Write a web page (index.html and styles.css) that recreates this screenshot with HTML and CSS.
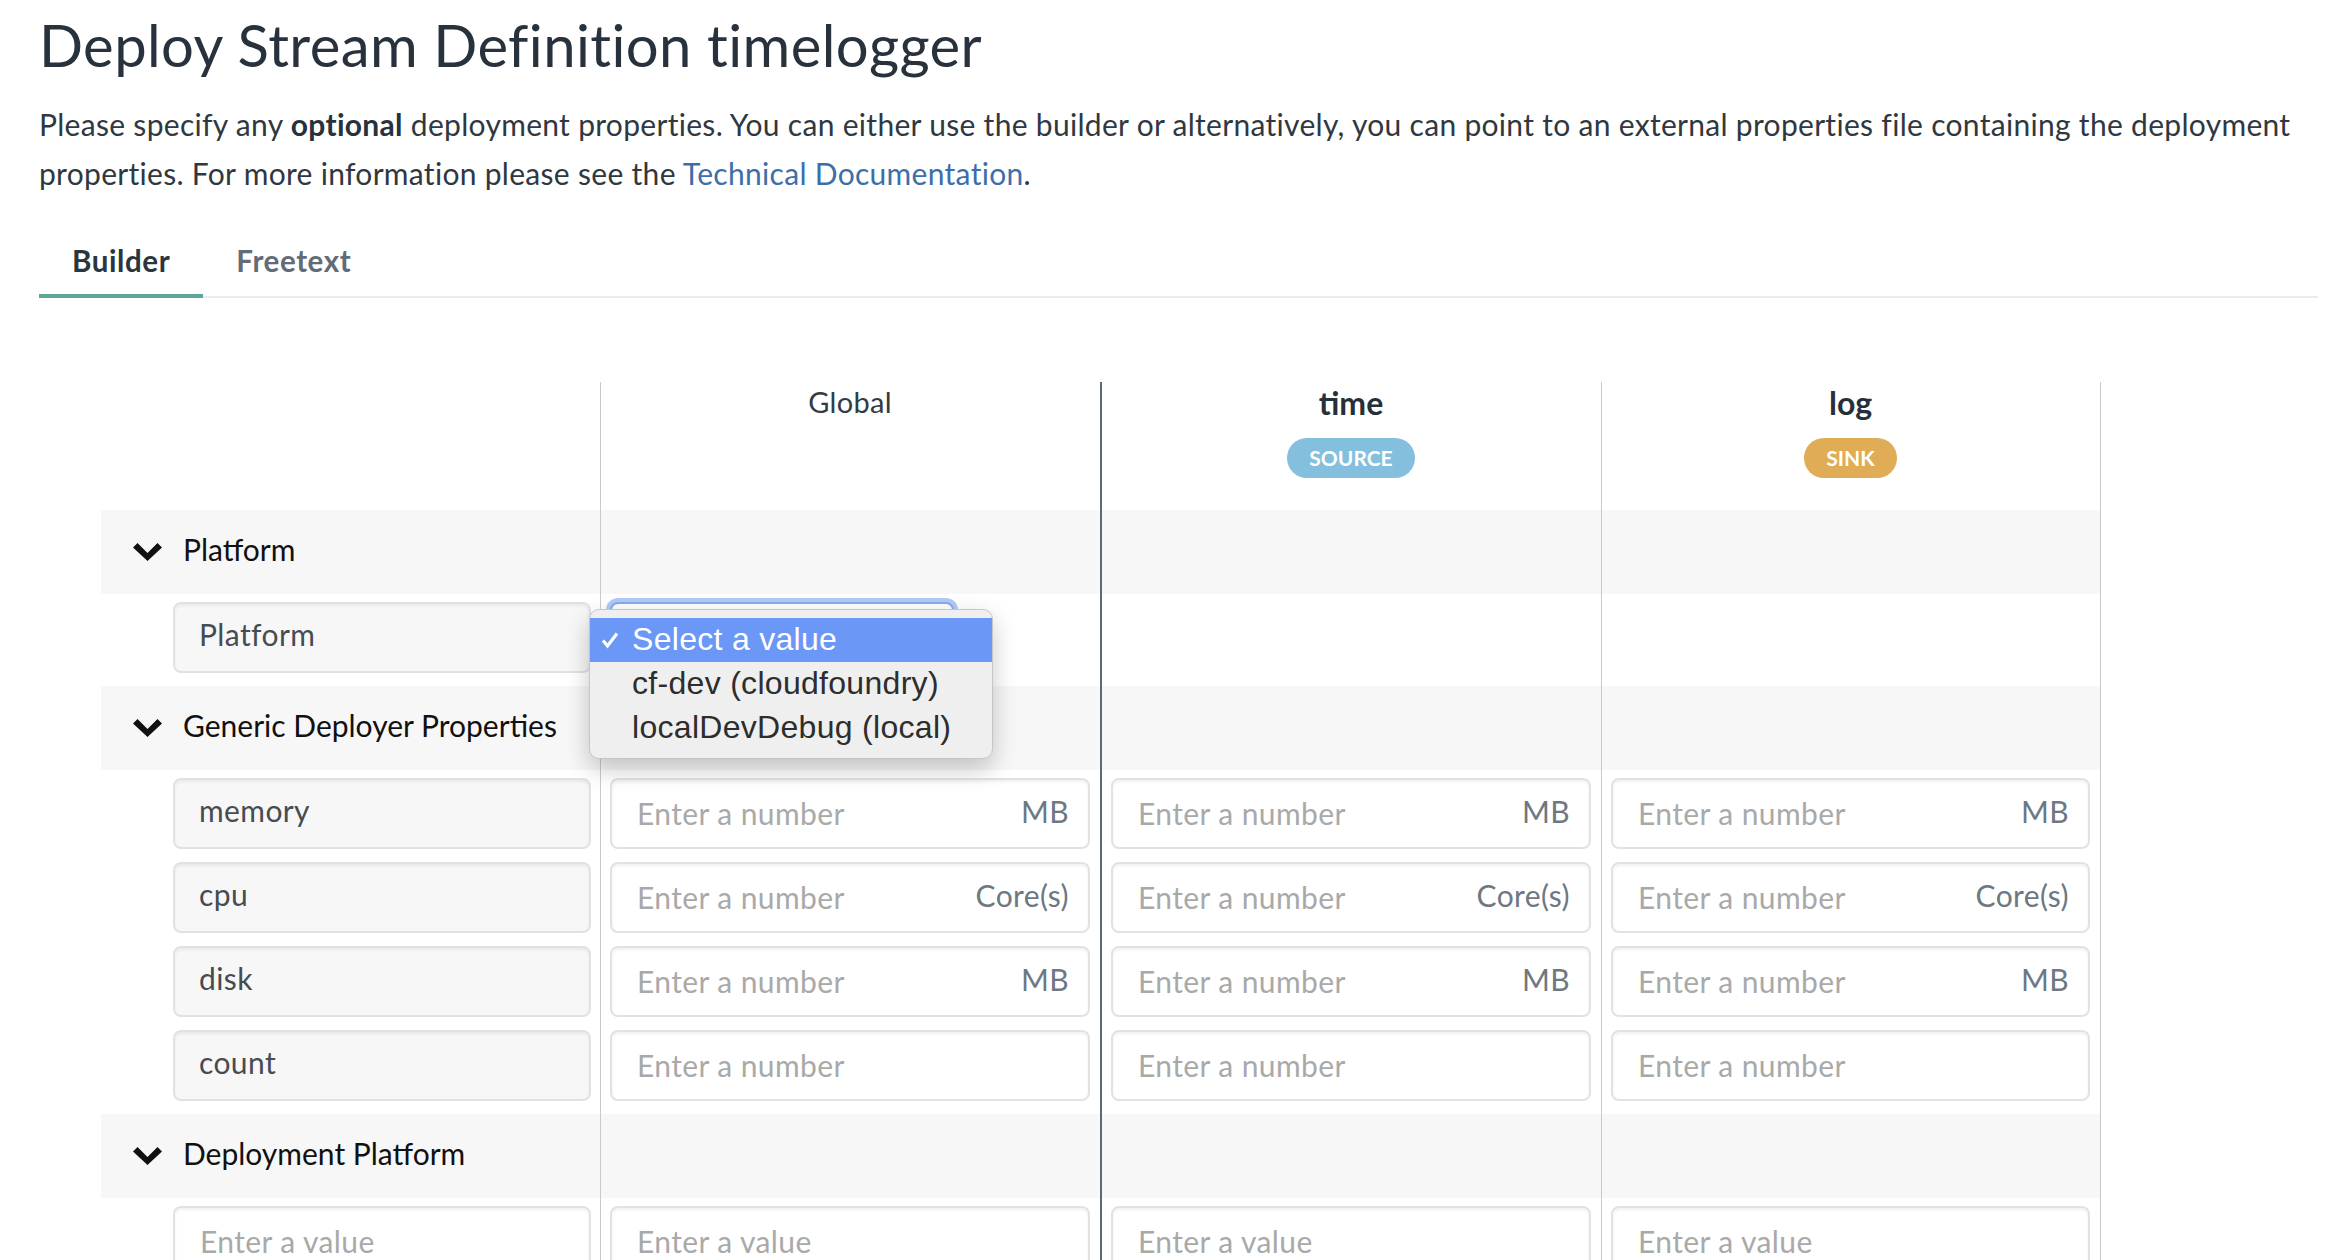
FILE: index.html
```html
<!DOCTYPE html>
<html lang="en">
<head>
<meta charset="utf-8">
<title>Deploy Stream Definition timelogger</title>
<link rel="stylesheet" href="styles.css">
</head>
<body>
<div class="page">
  <h1 class="title">Deploy Stream Definition timelogger</h1>
  <p class="intro">Please specify any <strong>optional</strong> deployment properties. You can either use the builder or alternatively, you can point to an external properties file containing the deployment properties. For more information please see the <a href="#">Technical Documentation</a>.</p>

  <div class="tabs">
    <a class="tab active" href="#">Builder</a>
    <a class="tab" href="#">Freetext</a>
  </div>

  <div class="builder">
    <div class="row head">
      <div class="cell lc"></div>
      <div class="cell vc"><div class="col-title">Global</div></div>
      <div class="cell vc dark"><div class="app-name">time</div><span class="badge source">SOURCE</span></div>
      <div class="cell vc last"><div class="app-name">log</div><span class="badge sink">SINK</span></div>
    </div>

    <div class="row section">
      <div class="cell lc"><svg class="chev" viewBox="0 0 29 18" width="29" height="18"><polygon points="0,4.5 4.5,0 14.5,10 24.5,0 29,4.5 14.5,18"/></svg><span>Platform</span></div>
      <div class="cell vc"></div>
      <div class="cell vc dark"></div>
      <div class="cell vc last"></div>
    </div>

    <div class="row prop first last">
      <div class="cell lc"><div class="box label-box">Platform</div></div>
      <div class="cell vc">
        <div class="select-wrap">
          <div class="select-box"></div>
          <div class="popup">
            <div class="opt sel"><svg class="check" viewBox="0 0 18 18" width="18" height="18"><path d="M2 9.5 L6.5 15 L16 2.5"/></svg>Select a value</div>
            <div class="opt">cf-dev (cloudfoundry)</div>
            <div class="opt">localDevDebug (local)</div>
          </div>
        </div>
      </div>
      <div class="cell vc dark"></div>
      <div class="cell vc last"></div>
    </div>

    <div class="row section">
      <div class="cell lc"><svg class="chev" viewBox="0 0 29 18" width="29" height="18"><polygon points="0,4.5 4.5,0 14.5,10 24.5,0 29,4.5 14.5,18"/></svg><span>Generic Deployer Properties</span></div>
      <div class="cell vc"></div>
      <div class="cell vc dark"></div>
      <div class="cell vc last"></div>
    </div>

    <div class="row prop first">
      <div class="cell lc"><div class="box label-box">memory</div></div>
      <div class="cell vc"><div class="box input-box"><input placeholder="Enter a number"><span class="unit">MB</span></div></div>
      <div class="cell vc dark"><div class="box input-box"><input placeholder="Enter a number"><span class="unit">MB</span></div></div>
      <div class="cell vc last"><div class="box input-box"><input placeholder="Enter a number"><span class="unit">MB</span></div></div>
    </div>
    <div class="row prop">
      <div class="cell lc"><div class="box label-box">cpu</div></div>
      <div class="cell vc"><div class="box input-box"><input placeholder="Enter a number"><span class="unit">Core(s)</span></div></div>
      <div class="cell vc dark"><div class="box input-box"><input placeholder="Enter a number"><span class="unit">Core(s)</span></div></div>
      <div class="cell vc last"><div class="box input-box"><input placeholder="Enter a number"><span class="unit">Core(s)</span></div></div>
    </div>
    <div class="row prop">
      <div class="cell lc"><div class="box label-box">disk</div></div>
      <div class="cell vc"><div class="box input-box"><input placeholder="Enter a number"><span class="unit">MB</span></div></div>
      <div class="cell vc dark"><div class="box input-box"><input placeholder="Enter a number"><span class="unit">MB</span></div></div>
      <div class="cell vc last"><div class="box input-box"><input placeholder="Enter a number"><span class="unit">MB</span></div></div>
    </div>
    <div class="row prop last">
      <div class="cell lc"><div class="box label-box">count</div></div>
      <div class="cell vc"><div class="box input-box"><input placeholder="Enter a number"></div></div>
      <div class="cell vc dark"><div class="box input-box"><input placeholder="Enter a number"></div></div>
      <div class="cell vc last"><div class="box input-box"><input placeholder="Enter a number"></div></div>
    </div>

    <div class="row section">
      <div class="cell lc"><svg class="chev" viewBox="0 0 29 18" width="29" height="18"><polygon points="0,4.5 4.5,0 14.5,10 24.5,0 29,4.5 14.5,18"/></svg><span>Deployment Platform</span></div>
      <div class="cell vc"></div>
      <div class="cell vc dark"></div>
      <div class="cell vc last"></div>
    </div>

    <div class="row prop first last">
      <div class="cell lc"><div class="box input-box"><input placeholder="Enter a value"></div></div>
      <div class="cell vc"><div class="box input-box"><input placeholder="Enter a value"></div></div>
      <div class="cell vc dark"><div class="box input-box"><input placeholder="Enter a value"></div></div>
      <div class="cell vc last"><div class="box input-box"><input placeholder="Enter a value"></div></div>
    </div>
  </div>
</div>
</body>
</html>
```

FILE: styles.css
```css
html, body {
  margin: 0;
  padding: 0;
  background: #ffffff;
}

body {
  font-family: Lato, "Noto Sans", sans-serif;
  color: #333a42;
}

.page {
  padding: 10px 12px 0 39px;
}

.title {
  margin: 0;
  font-size: 58px;
  font-weight: 400;
  line-height: 1.2;
  letter-spacing: 0.4px;
  color: #27323d;
}

.intro {
  margin: 20px 0 0 0;
  font-size: 30px;
  line-height: 49px;
  letter-spacing: 0.3px;
  color: #2f3841;
}

.intro strong {
  font-weight: 700;
  color: #28323c;
}

.intro a {
  color: #3d6ea8;
  text-decoration: none;
}

.tabs {
  margin-top: 30px;
  display: flex;
  border-bottom: 2px solid #ebebeb;
}

.tab {
  display: block;
  padding: 15px 33px 16px 33px;
  margin-bottom: -2px;
  font-size: 29.5px;
  font-weight: 700;
  line-height: 35px;
  letter-spacing: 0.6px;
  color: #616c77;
  text-decoration: none;
  border-bottom: 4px solid transparent;
}

.tab.active {
  color: #2a3540;
  border-bottom-color: #5da597;
}

.builder {
  margin: 84px 0 0 62px;
  width: 2000px;
}

.row {
  display: grid;
  grid-template-columns: 499px 500px 501px 500px;
}

.cell {
  box-sizing: border-box;
  min-width: 0;
}

.cell.vc {
  border-left: 1px solid #cacaca;
  padding: 0 10px 0 9px;
}

.cell.dark {
  border-left: 2px solid #5d6b78;
}

.cell.last {
  border-right: 1px solid #cacaca;
}

.cell.lc {
  padding: 0 9px 0 72px;
}

/* header */
.row.head {
  height: 128px;
}

.row.head .cell.vc {
  padding-top: 2px;
  text-align: center;
}

.col-title {
  font-size: 29px;
  line-height: 35px;
  letter-spacing: 0.3px;
  color: #333b43;
}

.app-name {
  font-size: 32px;
  font-weight: 700;
  line-height: 1.2;
  color: #263038;
}

.badge {
  display: inline-block;
  margin-top: 16px;
  height: 40px;
  line-height: 40px;
  padding: 0 22px;
  border-radius: 20px;
  font-size: 21px;
  font-weight: 700;
  color: #ffffff;
}

.badge.source {
  background: #84bfdd;
}

.badge.sink {
  background: #e0ac55;
}

/* sections */
.row.section {
  height: 84px;
  background: #f7f7f7;
}

.row.section .cell.lc {
  padding: 0 0 6px 32px;
  display: flex;
  align-items: center;
  font-size: 30px;
  color: #111111;
  white-space: nowrap;
}

.chev {
  flex: none;
  margin: 6px 21px 0 0;
  fill: #111111;
}

/* property rows */
.row.prop .cell {
  padding-top: 7px;
  padding-bottom: 6px;
}

.row.prop.first .cell {
  padding-top: 8px;
}

.row.prop.last .cell {
  padding-bottom: 13px;
}

.box {
  box-sizing: border-box;
  height: 71px;
  border: 2px solid #e2e2e2;
  border-radius: 8px;
  display: flex;
  align-items: center;
  box-shadow: inset 0 2px 3px rgba(0, 0, 0, 0.06);
  font-size: 30px;
  letter-spacing: 0.4px;
}

.label-box {
  background: #f7f7f7;
  padding: 0 0 7px 24px;
  color: #464c52;
}

.input-box {
  background: #ffffff;
  padding: 0 19px 0 25px;
}

.input-box input {
  flex: 1;
  min-width: 0;
  border: 0;
  outline: 0;
  padding: 0;
  margin: 0;
  background: transparent;
  font-family: Lato, "Noto Sans", sans-serif;
  font-size: 30px;
  letter-spacing: 0.4px;
  color: #444;
}

.input-box input::placeholder {
  color: #a9a9a9;
  opacity: 1;
}

.unit {
  flex: none;
  padding-bottom: 4px;
  color: #6d7882;
}

/* select + open popup */
.select-wrap {
  position: relative;
  width: 344px;
}

.select-box {
  box-sizing: border-box;
  height: 71px;
  border: 2px solid #86abee;
  border-radius: 8px;
  background: #ffffff;
  box-shadow: 0 0 0 4px rgba(112, 158, 240, 0.55);
}

.popup {
  position: absolute;
  left: -21px;
  top: 7px;
  width: 404px;
  box-sizing: border-box;
  padding: 8px 0;
  background: #efefef;
  border: 1px solid #c6c6c6;
  border-radius: 10px;
  box-shadow: 0 10px 24px rgba(0, 0, 0, 0.22);
  font-family: "Liberation Sans", Arial, sans-serif;
  font-size: 32px;
  letter-spacing: 0.3px;
  color: #2d2d2d;
  z-index: 10;
}

.opt {
  position: relative;
  height: 44px;
  display: flex;
  align-items: center;
  padding-left: 42px;
}

.opt.sel {
  background: #6b97f6;
  color: #ffffff;
}

.check {
  position: absolute;
  left: 11px;
  top: 13px;
  fill: none;
  stroke: #ffffff;
  stroke-width: 3.2;
}
```
